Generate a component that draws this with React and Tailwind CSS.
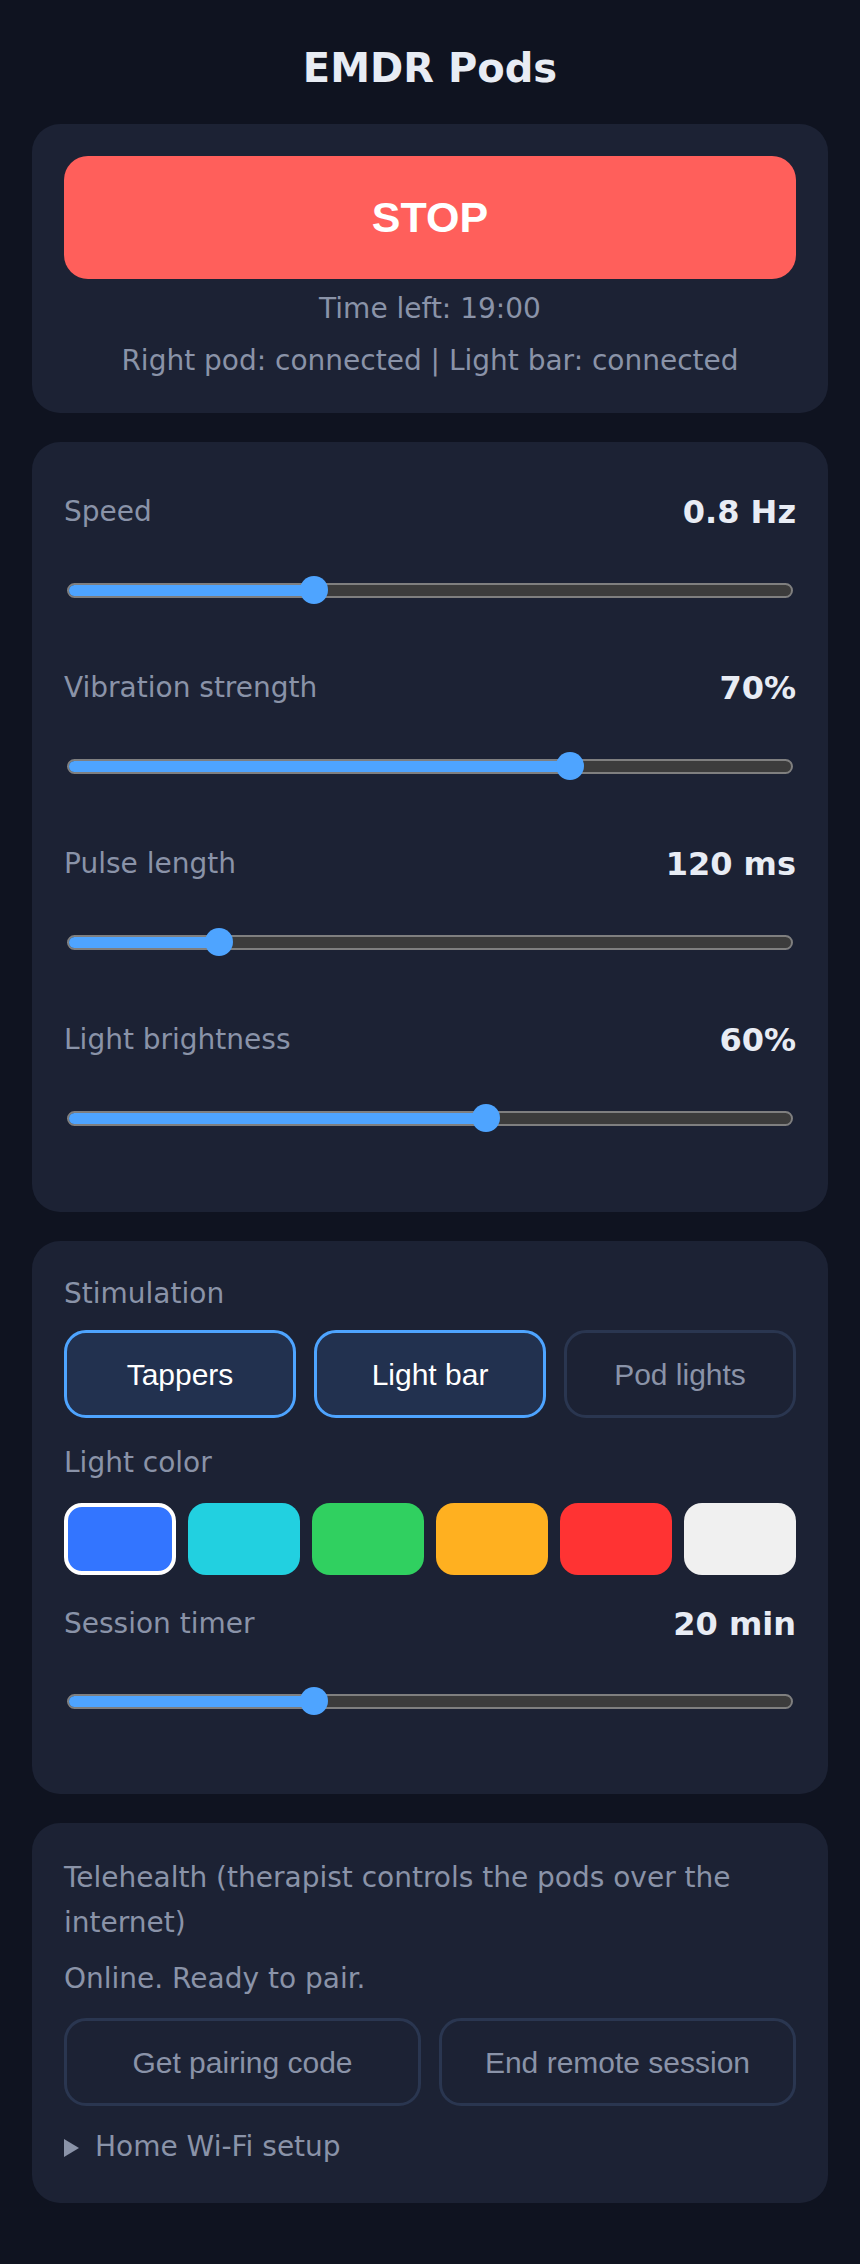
import { useState } from 'react'

const SANS = "font-['DejaVu_Sans','Noto_Sans',sans-serif]"
const BTN = "font-['Liberation_Sans',Arial,sans-serif]"

const SLIDERS = [
  { key: 'speed', label: 'Speed', value: '0.8 Hz', pct: 0.334 },
  { key: 'strength', label: 'Vibration strength', value: '70%', pct: 0.7 },
  { key: 'pulse', label: 'Pulse length', value: '120 ms', pct: 0.198 },
  { key: 'brightness', label: 'Light brightness', value: '60%', pct: 0.58 },
]

const MODES = ['Tappers', 'Light bar', 'Pod lights']

const COLORS = ['#3375ff', '#22d0e0', '#30d060', '#ffb020', '#ff3333', '#f0f0f0']

// track is 726px wide, thumb is 28px, so the thumb centre travels 698px
function Range({ pct }) {
  const center = 14 + pct * 698
  return (
    <div className="relative h-[28px] mx-[3px] flex items-center">
      <div className="w-full h-[15px] rounded-full border-2 border-[#7f7f7f] bg-[#3c3c3c] overflow-hidden">
        <div className="h-full bg-[#4ea4ff]" style={{ width: center }} />
      </div>
      <div
        className="absolute top-0 w-[28px] h-[28px] rounded-full bg-[#4ea4ff]"
        style={{ left: center - 14 }}
      />
    </div>
  )
}

function ValueRow({ label, value }) {
  return (
    <div className="h-[48px] flex items-center justify-between">
      <span className="text-[28px] leading-[42px] text-[#8a93a8]">{label}</span>
      <span className="text-[32px] leading-[48px] font-bold text-[#e8ecf4]">{value}</span>
    </div>
  )
}

function Card({ className = '', children }) {
  return <section className={`bg-[#1c2234] rounded-[28px] px-8 ${className}`}>{children}</section>
}

export default function App() {
  const [modes, setModes] = useState({ Tappers: true, 'Light bar': true, 'Pod lights': false })
  const [color, setColor] = useState(0)

  return (
    <div className={`min-h-screen bg-[#0f1320] px-8 pt-[44px] pb-[60px] ${SANS}`}>
      <h1 className="text-center text-[40px] leading-[48px] font-bold text-[#e8ecf4] mb-[32px]">EMDR Pods</h1>

      <div className="flex flex-col gap-[29px]">
        {/* session control */}
        <Card className="pt-8 pb-[31px] text-center">
          <button className={`w-full h-[123px] rounded-[24px] bg-[#ff5f5b] text-white text-[43px] font-bold ${BTN}`}>
            STOP
          </button>
          <p className="mt-[9px] text-[28px] leading-[42px] text-[#8a93a8]">Time left: 19:00</p>
          <p className="mt-[10px] text-[28px] leading-[42px] text-[#8a93a8]">Right pod: connected | Light bar: connected</p>
        </Card>

        {/* stimulation sliders */}
        <Card className="pt-[46px] pb-[80px]">
          {SLIDERS.map((s, i) => (
            <div key={s.key} className={i > 0 ? 'mt-[60px]' : ''}>
              <ValueRow label={s.label} value={s.value} />
              <div className="mt-[40px]">
                <Range pct={s.pct} />
              </div>
            </div>
          ))}
        </Card>

        {/* outputs, colour, timer */}
        <Card className="pt-8 pb-[79px]">
          <p className="text-[28px] leading-[42px] text-[#8a93a8]">Stimulation</p>
          <div className="mt-[15px] grid grid-cols-3 gap-[18px]">
            {MODES.map(m => (
              <button
                key={m}
                onClick={() => setModes({ ...modes, [m]: !modes[m] })}
                className={`h-[88px] rounded-[22px] border-[3px] text-[30px] ${BTN} ${
                  modes[m]
                    ? 'bg-[#22314f] border-[#4ea4ff] text-white'
                    : 'bg-transparent border-[#2a3650] text-[#8a93a8]'
                }`}
              >
                {m}
              </button>
            ))}
          </div>

          <p className="mt-[24px] text-[28px] leading-[42px] text-[#8a93a8]">Light color</p>
          <div className="mt-[19px] grid grid-cols-6 gap-[12px]">
            {COLORS.map((c, i) => (
              <button
                key={c}
                onClick={() => setColor(i)}
                className={`h-[72px] rounded-[18px] ${color === i ? 'border-[4px] border-white' : ''}`}
                style={{ backgroundColor: c }}
              />
            ))}
          </div>

          <div className="mt-[25px]">
            <ValueRow label="Session timer" value="20 min" />
          </div>
          <div className="mt-[39px]">
            <Range pct={0.334} />
          </div>
        </Card>

        {/* remote sessions */}
        <Card className="pt-8 pb-[35px]">
          <p className="text-[28px] leading-[45px] text-[#8a93a8]">
            Telehealth (therapist controls the pods over the internet)
          </p>
          <p className="mt-[13px] text-[28px] leading-[42px] text-[#8a93a8]">Online. Ready to pair.</p>
          <div className="mt-[18px] grid grid-cols-2 gap-[18px]">
            <button className={`h-[88px] rounded-[22px] border-[3px] border-[#2a3650] text-[30px] text-[#8a93a8] ${BTN}`}>
              Get pairing code
            </button>
            <button className={`h-[88px] rounded-[22px] border-[3px] border-[#2a3650] text-[30px] text-[#8a93a8] ${BTN}`}>
              End remote session
            </button>
          </div>
          <details className="mt-[20px]">
            <summary className="list-none [&::-webkit-details-marker]:hidden text-[28px] leading-[42px] text-[#8a93a8] cursor-pointer">
              <svg width="15" height="18" viewBox="0 0 15 18" className="inline-block mr-4">
                <path d="M0 0 L15 9 L0 18 Z" fill="#8a93a8" />
              </svg>
              Home Wi-Fi setup
            </summary>
          </details>
        </Card>
      </div>
    </div>
  )
}
